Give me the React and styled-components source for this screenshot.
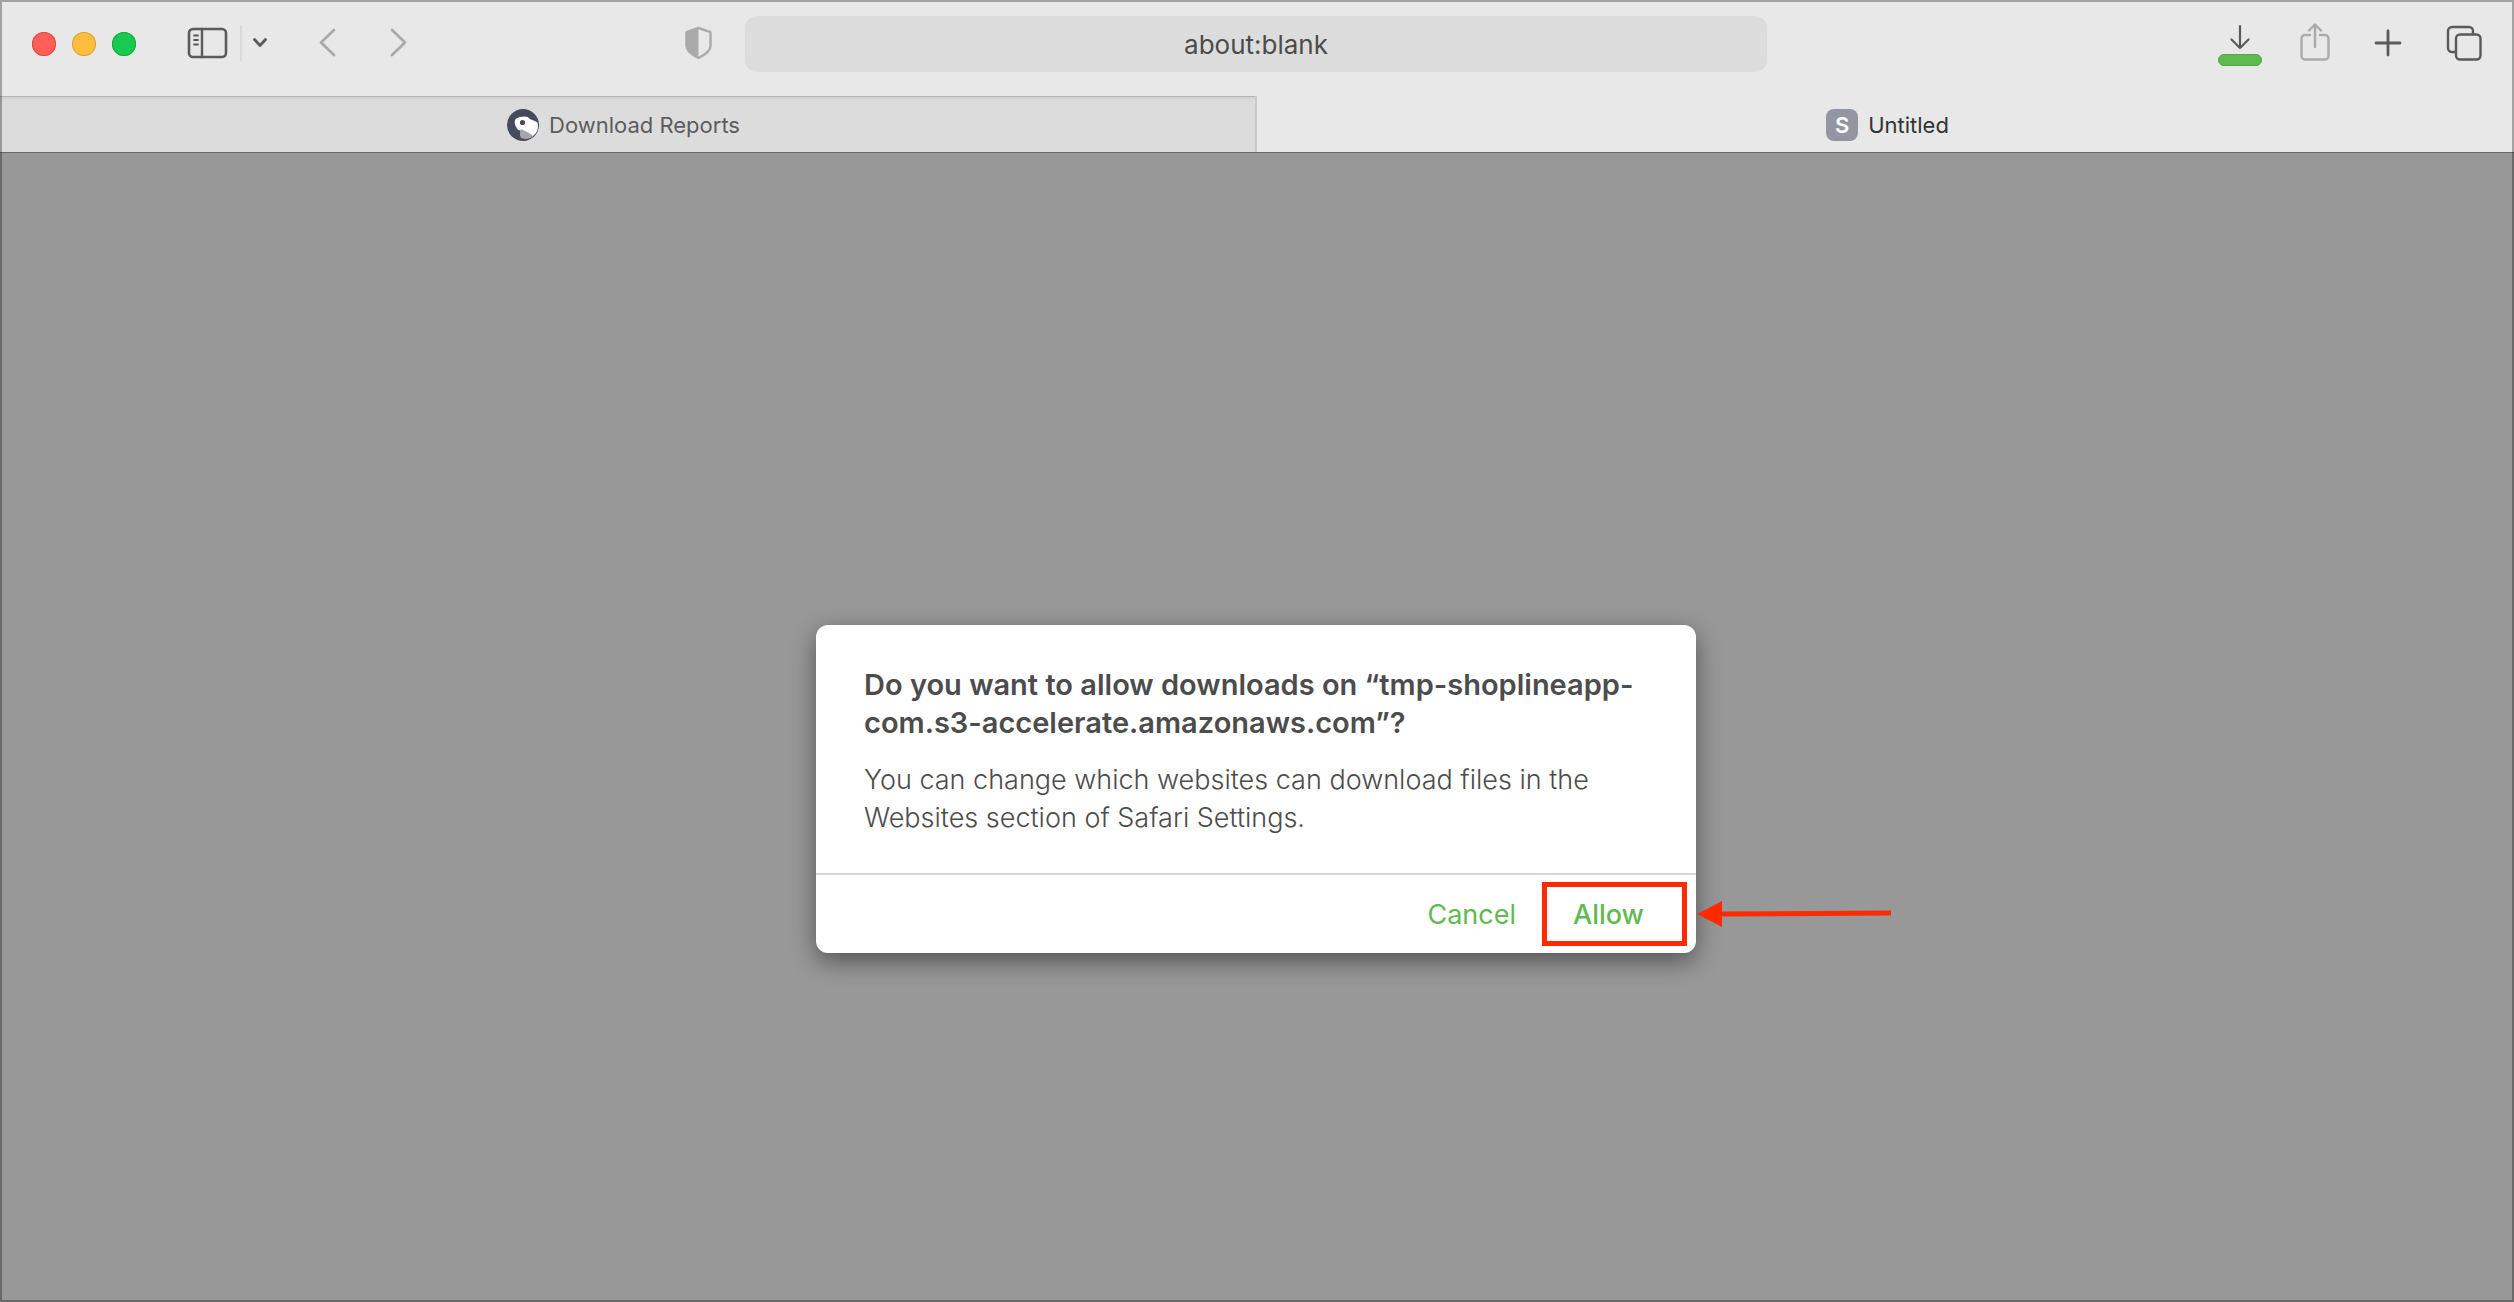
import styled, { createGlobalStyle } from 'styled-components';

const colors = {
    chrome: '#e8e8e8',
    field: '#dcdcdc',
    page: '#989898',
    icon: '#5a5a5a',
    iconMuted: '#aaaaaa',
    text: '#4c4c4c',
    green: '#5fba50',
    red: '#ff2a00',
};

const GlobalStyle = createGlobalStyle`
    * {
        box-sizing: border-box;
    }
    body {
        margin: 0;
        font-family: Inter, 'Liberation Sans', sans-serif;
        background-color: ${colors.page};
    }
    button {
        display: flex;
        padding: 0;
        border: none;
        background: none;
        font-family: inherit;
    }
    svg {
        display: block;
    }
`;

const StyledWindow = styled.div`
    position: relative;
    display: flex;
    flex-direction: column;
    min-height: 100vh;

    /* window outline, drawn over everything */
    &::after {
        content: '';
        position: absolute;
        inset: 0;
        border: 2px solid rgba(0, 0, 0, 0.3);
        pointer-events: none;
    }
`;

const StyledToolbar = styled.header`
    display: grid;
    grid-template-columns: 745fr 1022fr 747fr;
    align-items: start;
    height: 96px;
    padding-top: 16px;
    background-color: ${colors.chrome};
`;

const StyledTools = styled.div`
    display: flex;
    align-items: center;
    height: 54px;
`;

const StyledLeftTools = styled(StyledTools)`
    padding-left: 32px;
    padding-right: 32px;
`;

const StyledRightTools = styled(StyledTools)`
    justify-content: flex-end;
    gap: 44px;
    padding-right: 32px;
`;

const StyledLights = styled.div`
    display: flex;
    gap: 16px;
    margin-right: 50px;
    padding-top: 2px;
`;

const StyledLight = styled.button`
    width: 24px;
    height: 24px;
    border-radius: 50%;
    background-color: ${({ color }) => color};
    box-shadow: inset 0 0 0 1px ${({ edge }) => edge};
`;

const StyledDivider = styled.span`
    width: 2px;
    height: 36px;
    margin: 0 10px 0 12px;
    background-color: #dadada;
`;

const StyledHistory = styled.div`
    display: flex;
    gap: 52px;
    margin-left: 49px;
`;

const StyledShield = styled.button`
    margin-left: auto;
`;

const StyledDownloads = styled.button`
    flex-direction: column;
    align-items: center;
    gap: 4px;
    margin-right: -6px;
    padding-top: 4px;
`;

const StyledProgress = styled.span`
    width: 44px;
    height: 12px;
    border: 1px solid #50a743;
    border-radius: 6px;
    background-color: ${colors.green};
`;

const StyledAddress = styled.input`
    width: 100%;
    height: 56px;
    padding: 0 24px;
    border: none;
    border-radius: 12px;
    outline: none;
    background-color: ${colors.field};
    color: ${colors.text};
    font-family: inherit;
    font-size: 26px;
    text-align: center;
`;

const StyledTabs = styled.nav`
    display: flex;
    height: 57px;
    background-color: ${colors.chrome};
    border-bottom: 1px solid #6b6b6b;
`;

const StyledTab = styled.button`
    && {
        flex: 1;
        align-items: center;
        justify-content: center;
        gap: 10px;
        padding: ${({ $active }) => ($active ? '2px 3px 0 7px' : '2px 8px 0 0')};
        font-size: 22px;
        color: ${({ $active }) => ($active ? '#333333' : '#5c5c5c')};
        ${({ $active }) =>
            !$active &&
            `
            border-right: 2px solid #c8c8c8;
            background: linear-gradient(#b4b4b4 1px, #d0d0d0 1px, ${colors.field} 5px);
        `}
    }
`;

const StyledBadge = styled.span`
    display: flex;
    align-items: center;
    justify-content: center;
    width: 32px;
    height: 32px;
    border-radius: 8px;
    background-color: #9495a2;
    color: #ffffff;
    font-size: 22px;
    font-weight: 600;
`;

const StyledPage = styled.main`
    flex: 1;
    display: flex;
    align-items: flex-start;
    justify-content: center;
    padding-top: 472px;
    padding-right: 2px;
`;

const StyledDialog = styled.section`
    width: 35%;
    min-width: 880px;
    border-radius: 12px;
    background-color: #ffffff;
    color: ${colors.text};
    box-shadow: 0 8px 24px rgba(0, 0, 0, 0.45);
`;

const StyledMessage = styled.div`
    padding: 41px 48px 36px;
    border-bottom: 2px solid #d6d6d6;
`;

const StyledTitle = styled.h1`
    margin: 0 0 19px;
    font-size: 29px;
    font-weight: 600;
    line-height: 38px;
`;

const StyledBody = styled.p`
    margin: 0;
    font-size: 27px;
    font-weight: 350;
    line-height: 38px;
`;

const StyledFooter = styled.footer`
    display: flex;
    align-items: center;
    justify-content: flex-end;
    gap: 26px;
    height: 78px;
    padding-right: 9px;
`;

const StyledAction = styled.button`
    padding-top: 2px;
    color: ${colors.green};
    font-size: 27px;
    line-height: 38px;
`;

const StyledHighlight = styled.div`
    position: relative;
    display: flex;
    align-items: center;
    height: 64px;
    padding: 0 38px 0 26px;
    border: 5px solid ${colors.red};
`;

const StyledAllow = styled(StyledAction)`
    font-weight: 500;
`;

const StyledArrow = styled.svg`
    position: absolute;
    left: 100%;
    top: 14px;
    margin-left: 15px;
`;

function Icon({ width, height, muted, strokeWidth = 2.4, children }) {
    return (
        <svg
            width={width}
            height={height}
            viewBox={`0 0 ${width} ${height}`}
            fill="none"
            stroke={muted ? colors.iconMuted : colors.icon}
            strokeWidth={strokeWidth}
            strokeLinecap="round"
            strokeLinejoin="round"
            aria-hidden="true"
        >
            {children}
        </svg>
    );
}

function Toolbar() {
    return (
        <StyledToolbar>
            <StyledLeftTools>
                <StyledLights>
                    <StyledLight color="#ff5f57" edge="#e2463f" aria-label="Close" />
                    <StyledLight color="#ffbd3f" edge="#dfa033" aria-label="Minimize" />
                    <StyledLight color="#19c950" edge="#12ac37" aria-label="Zoom" />
                </StyledLights>
                <button aria-label="Show sidebar">
                    <Icon width={42} height={32}>
                        <rect x="3" y="2" width="37" height="28" rx="4" strokeWidth="2.6" />
                        <path d="M16 2v28" />
                        <path d="M8 8.500h4M8 13h4M8 17.500h4" strokeWidth="1.800" />
                    </Icon>
                </button>
                <StyledDivider />
                <button aria-label="Sidebar options">
                    <Icon width={16} height={12} strokeWidth={2.8}>
                        <path d="M2.500 2.500L8 8.500l5.500-6" />
                    </Icon>
                </button>
                <StyledHistory>
                    <button aria-label="Back">
                        <Icon width={20} height={32} muted strokeWidth={2.8}>
                            <path d="M17 3L4 15.500 17 28" />
                        </Icon>
                    </button>
                    <button aria-label="Forward">
                        <Icon width={20} height={32} muted strokeWidth={2.8}>
                            <path d="M3 3l13 12.500L3 28" />
                        </Icon>
                    </button>
                </StyledHistory>
                <StyledShield aria-label="Privacy report">
                    <Icon width={29} height={34} muted>
                        <path d="M14.500 2L26.500 6.200V20c0 4-4 8-12 12C6.500 28 2.500 24 2.500 20V6.200z" />
                        <path
                            d="M14.500 2v30C6.500 28 2.500 24 2.500 20V6.200z"
                            fill={colors.iconMuted}
                            stroke="none"
                        />
                    </Icon>
                </StyledShield>
            </StyledLeftTools>
            <StyledAddress aria-label="Address" defaultValue="about:blank" />
            <StyledRightTools>
                <StyledDownloads aria-label="Downloads">
                    <Icon width={22} height={26} strokeWidth={2.2}>
                        <path d="M11 2v22M2.500 15.500L11 24l8.500-8.500" />
                    </Icon>
                    <StyledProgress />
                </StyledDownloads>
                <button aria-label="Share">
                    <Icon width={30} height={40} muted>
                        <path d="M10 12H5A3.500 3.500 0 0 0 1.500 15.500v17.500A3.500 3.500 0 0 0 5 36.500h20a3.500 3.500 0 0 0 3.500-3.500V15.500a3.500 3.500 0 0 0-3.500-3.500h-5" />
                        <path d="M15 24V2M9 7.500L15 1.500l6 6" />
                    </Icon>
                </button>
                <button aria-label="New tab">
                    <Icon width={28} height={28} strokeWidth={2.8}>
                        <path d="M14 2v24M2 14h24" />
                    </Icon>
                </button>
                <button aria-label="Tab overview">
                    <Icon width={36} height={36}>
                        <path d="M9 27H6a4 4 0 0 1-4-4V6a4 4 0 0 1 4-4h17a4 4 0 0 1 4 4v3" />
                        <rect x="10" y="9.500" width="24.500" height="25" rx="4" />
                    </Icon>
                </button>
            </StyledRightTools>
        </StyledToolbar>
    );
}

function ShopIcon() {
    return (
        <svg width="32" height="32" viewBox="0 0 32 32" aria-hidden="true">
            <circle cx="16" cy="16" r="16" fill="#454a5c" />
            <path
                d="M8 11c1-2 3-2 5-3 4-1 8-1 10 2l7 3c2 3 1 8-1 11l-4 4-4-4-5-2-5-1c-2-3-4-6-3-10z"
                fill="#ffffff"
            />
            <path d="M14 20l4 2 4 2 4 3c-2 3-8 4-12 2-2-3-1-6 0-9z" fill="#a4a6ac" />
            <circle cx="15.500" cy="13.500" r="2.600" fill="#454a5c" />
        </svg>
    );
}

function Dialog() {
    return (
        <StyledDialog role="dialog" aria-labelledby="dialog-title">
            <StyledMessage>
                <StyledTitle id="dialog-title">
                    Do you want to allow downloads on “tmp-shoplineapp-com.s3-accelerate.amazonaws.com”?
                </StyledTitle>
                <StyledBody>
                    You can change which websites can download files in the Websites section of
                    Safari Settings.
                </StyledBody>
            </StyledMessage>
            <StyledFooter>
                <StyledAction>Cancel</StyledAction>
                <StyledHighlight>
                    <StyledAllow>Allow</StyledAllow>
                    <StyledArrow width="195" height="26" viewBox="0 0 195 26" aria-hidden="true">
                        <path d="M0 13L25 0v26z" fill={colors.red} />
                        <path d="M22 13L194 12" stroke={colors.red} strokeWidth="5" />
                    </StyledArrow>
                </StyledHighlight>
            </StyledFooter>
        </StyledDialog>
    );
}

function App() {
    return (
        <>
            <GlobalStyle />
            <StyledWindow>
                <Toolbar />
                <StyledTabs aria-label="Tabs">
                    <StyledTab>
                        <ShopIcon />
                        Download Reports
                    </StyledTab>
                    <StyledTab $active>
                        <StyledBadge>S</StyledBadge>
                        Untitled
                    </StyledTab>
                </StyledTabs>
                <StyledPage>
                    <Dialog />
                </StyledPage>
            </StyledWindow>
        </>
    );
}
export default App;
